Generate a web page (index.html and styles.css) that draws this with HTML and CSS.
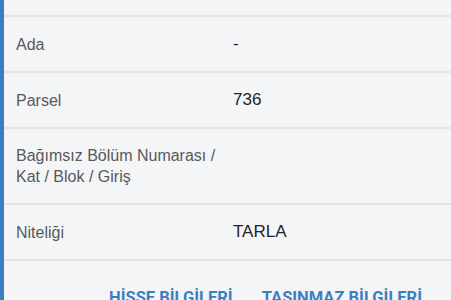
FILE: index.html
```html
<!DOCTYPE html>
<html lang="tr">
<head>
  <meta charset="UTF-8">
  <title>Taşınmaz Bilgileri</title>
  <link rel="stylesheet" href="styles.css">
</head>
<body>
  <div class="panel">
    <div class="row row-top"></div>
    <div class="row">
      <div class="label">Ada</div>
      <div class="value">-</div>
    </div>
    <div class="row">
      <div class="label">Parsel</div>
      <div class="value">736</div>
    </div>
    <div class="row row-tall">
      <div class="label">Bağımsız Bölüm Numarası /<br>Kat / Blok / Giriş</div>
      <div class="value"></div>
    </div>
    <div class="row">
      <div class="label">Niteliği</div>
      <div class="value">TARLA</div>
    </div>
    <div class="actions">
      <a class="action" href="#">HİSSE BİLGİLERİ</a>
      <a class="action" href="#">TAŞINMAZ BİLGİLERİ</a>
    </div>
  </div>
</body>
</html>
```

FILE: styles.css
```css
body {
  margin: 0;
  background: #f4f5f7;
  font-family: "Liberation Sans", Arial, sans-serif;
  overflow: hidden;
}

.panel {
  height: 300px;
  border-left: 4px solid #3b7fc2;
  background: #f4f5f7;
}

.row {
  display: flex;
  align-items: center;
  height: 54px;
  border-bottom: 2px solid #e4e5e8;
}

.row-top {
  height: 15px;
}

.row-tall {
  height: 74px;
}

.label {
  width: 217px;
  padding-left: 12px;
  font-size: 16px;
  line-height: 21px;
  color: #58595c;
}

.value {
  font-size: 17px;
  color: #222326;
}

.actions {
  display: flex;
  justify-content: flex-end;
  gap: 29px;
  padding: 27px 29px 0 0;
}

.action {
  font-family: Roboto, "Liberation Sans", sans-serif;
  font-weight: bold;
  font-size: 16.5px;
  color: #3b7fc2;
  text-decoration: none;
}
```
